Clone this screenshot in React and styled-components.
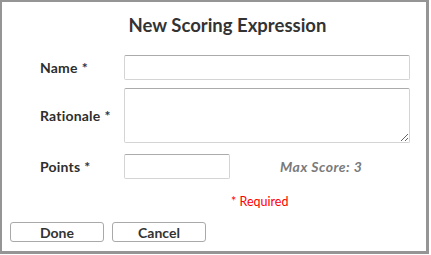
import React from 'react'
import styled, { createGlobalStyle } from 'styled-components'

const GlobalStyle = createGlobalStyle`
    html, body {
        margin: 0;
        padding: 0;
        background: #fff;
    }
    * {
        box-sizing: border-box;
    }
`

const Dialog = styled.div`
    width: 429px;
    height: 254px;
    background: #fff;
    border-style: solid;
    border-color: #959595;
    border-width: 2px 3px 3px 2px;
    font-family: Lato, "Open Sans", sans-serif;
    color: #333;
    display: flex;
    flex-direction: column;
`

const Title = styled.h1`
    margin: 0;
    padding-top: 12px;
    height: 53px;
    text-align: center;
    font-size: 18.5px;
    font-weight: 700;
    color: #333;
    padding-left: 27px;
`

const Form = styled.div`
    display: grid;
    grid-template-columns: 84px 286px;
    padding-left: 38px;
`

const Row = styled.div`
    display: contents;
`

const Label = styled.label`
    display: flex;
    align-items: center;
    font-size: 14px;
    font-weight: 700;
    letter-spacing: 0.2px;
    color: #2e2e2e;
    margin-bottom: ${props => props.gap || 0}px;
`

const Star = styled.span`
    color: #1f3550;
    margin-left: 4px;
`

const Field = styled.div`
    display: flex;
    align-items: center;
    margin-bottom: ${props => props.gap || 0}px;
`

const Input = styled.input`
    width: ${props => props.w || 286}px;
    height: ${props => props.h || 25}px;
    border: 1px solid #d4d4d4;
    border-top-color: #ababab;
    border-radius: 2px;
    padding: 2px 4px;
    font: inherit;
    outline: none;
`

const TextArea = styled.textarea`
    width: 286px;
    height: 55px;
    border: 1px solid #d4d4d4;
    border-top-color: #ababab;
    border-radius: 2px;
    padding: 2px 4px;
    font: inherit;
    outline: none;
    display: block;
`

const MaxScore = styled.span`
    margin-left: 50px;
    font-size: 14px;
    font-weight: 700;
    font-style: italic;
    letter-spacing: 0.5px;
    color: #7a7a7a;
`

const Required = styled.div`
    margin-top: 15px;
    padding-left: 229px;
    font-size: 12.5px;
    color: #f00;
`

const Buttons = styled.div`
    display: flex;
    gap: 8px;
    margin-top: 13px;
    padding-left: 8px;
`

const Button = styled.button`
    width: 94px;
    height: 20px;
    background: #fff;
    border: 1px solid #a9a9a9;
    border-radius: 3px;
    font-family: Lato, "Open Sans", sans-serif;
    font-size: 14px;
    font-weight: 700;
    color: #333;
    padding: 0;
`

const App = () => {
  return (
    <>
      <GlobalStyle />
      <Dialog>
        <Title>New Scoring Expression</Title>
        <Form>
          <Row>
            <Label gap={8}>Name<Star>*</Star></Label>
            <Field gap={8}><Input /></Field>
          </Row>
          <Row>
            <Label gap={11}>Rationale<Star>*</Star></Label>
            <Field gap={11}><TextArea /></Field>
          </Row>
          <Row>
            <Label>Points<Star>*</Star></Label>
            <Field>
              <Input w={106} h={25} />
              <MaxScore>Max Score: 3</MaxScore>
            </Field>
          </Row>
        </Form>
        <Required>* Required</Required>
        <Buttons>
          <Button>Done</Button>
          <Button>Cancel</Button>
        </Buttons>
      </Dialog>
    </>
  )
}

export default App
